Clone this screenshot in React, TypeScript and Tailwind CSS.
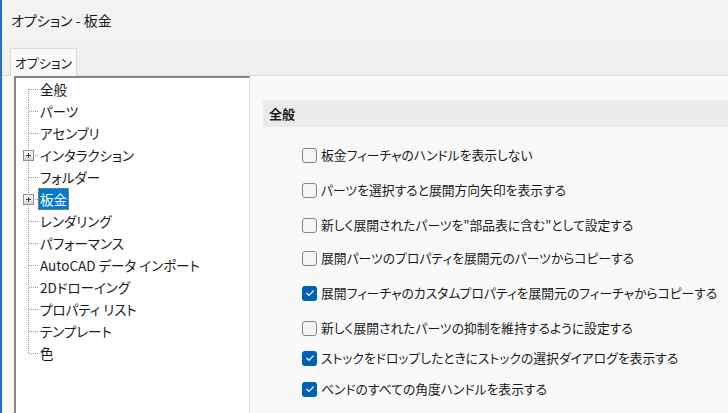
import * as React from "react"

interface TreeItem {
  label: string
  expandable?: boolean
  selected?: boolean
}

interface OptionRow {
  label: string
  checked: boolean
  gap: string
}

const treeItems: TreeItem[] = [
  { label: "全般" },
  { label: "パーツ" },
  { label: "アセンブリ" },
  { label: "インタラクション", expandable: true },
  { label: "フォルダー" },
  { label: "板金", expandable: true, selected: true },
  { label: "レンダリング" },
  { label: "パフォーマンス" },
  { label: "AutoCAD データ インポート" },
  { label: "2Dドローイング" },
  { label: "プロパティ リスト" },
  { label: "テンプレート" },
  { label: "色" },
]

const options: OptionRow[] = [
  { label: "板金フィーチャのハンドルを表示しない", checked: false, gap: "mt-[18px]" },
  { label: "パーツを選択すると展開方向矢印を表示する", checked: false, gap: "mt-[15px]" },
  { label: "新しく展開されたパーツを\"部品表に含む\"として設定する", checked: false, gap: "mt-[15px]" },
  { label: "展開パーツのプロパティを展開元のパーツからコピーする", checked: false, gap: "mt-[13px]" },
  { label: "展開フィーチャのカスタムプロパティを展開元のフィーチャからコピーする", checked: true, gap: "mt-[15px]" },
  { label: "新しく展開されたパーツの抑制を維持するように設定する", checked: false, gap: "mt-[15px]" },
  { label: "ストックをドロップしたときにストックの選択ダイアログを表示する", checked: true, gap: "mt-[10px]" },
  { label: "ベンドのすべての角度ハンドルを表示する", checked: true, gap: "mt-[11px]" },
]

// ツリーの点線と展開ボタン
function TreeLead({ first, last, expandable }: { first: boolean; last: boolean; expandable?: boolean }) {
  const top = first ? 11 : 0
  const bottom = last ? 11 : 22
  return (
    <svg width="22" height="22" viewBox="0 0 22 22" className="shrink-0" shapeRendering="crispEdges">
      <line x1="12.5" y1={top} x2="12.5" y2={bottom} stroke="#9a9a9a" strokeDasharray="1 1" />
      <line x1="13" y1="11.5" x2="22" y2="11.5" stroke="#9a9a9a" strokeDasharray="1 1" />
      {expandable && (
        <g>
          <defs>
            <linearGradient id="pb" x1="0" y1="0" x2="0" y2="1">
              <stop offset="0" stopColor="#ffffff" />
              <stop offset="1" stopColor="#d4d4d4" />
            </linearGradient>
          </defs>
          <rect x="7.5" y="6.5" width="10" height="10" fill="url(#pb)" stroke="#8e8f8f" />
          <line x1="10" y1="11.5" x2="15" y2="11.5" stroke="#1c3b73" />
          <line x1="12.5" y1="9" x2="12.5" y2="14" stroke="#1c3b73" />
        </g>
      )}
    </svg>
  )
}

function CheckBox({ checked }: { checked: boolean }) {
  if (checked) {
    return (
      <span className="w-[15px] h-[15px] rounded-[3px] bg-[#005fb8] flex items-center justify-center shrink-0">
        <svg width="10" height="10" viewBox="0 0 10 10">
          <path d="M1.8 5.2 L4 7.3 L8.3 2.8" fill="none" stroke="#ffffff" strokeWidth="1.2" strokeLinecap="round" strokeLinejoin="round" />
        </svg>
      </span>
    )
  }
  return <span className="w-[15px] h-[15px] rounded-[3px] border border-[#858585] bg-[#f5f5f5] shrink-0" />
}

export default function App() {
  return (
    <div className="w-[728px] h-[413px] overflow-hidden flex flex-col bg-[#f0f0f0] border-l-2 border-[#1f6fd1] text-[#1a1a1a] font-['Noto_Sans_CJK_JP','Noto_Sans',sans-serif] [font-feature-settings:'palt']">
      {/* タイトルバー */}
      <div className="h-[40px] shrink-0 flex items-center pl-[9px] bg-[#f3f3f3] text-[14px]">
        オプション - 板金
      </div>

      {/* タブ */}
      <div className="shrink-0 pt-[8px] pl-[8px] flex">
        <div className="relative z-10 -mb-px h-[28px] w-[67px] bg-[#f9f9f9] border border-b-0 border-[#dcdcdc] flex items-center justify-center text-[13px]">
          オプション
        </div>
      </div>

      {/* タブ内容 */}
      <div className="flex-1 min-h-0 flex bg-[#f9f9f9] border-t border-[#dcdcdc] pl-[12px] pt-[1px]">
        {/* ツリー */}
        <div className="w-[236px] shrink-0 bg-white border-l-2 border-t-2 border-[#858585] border-r border-r-[#e3e3e3] -mt-px text-[13.5px]">
          {treeItems.map((item, i) => (
            <div key={item.label} className="h-[22px] flex items-center">
              <TreeLead first={i === 0} last={i === treeItems.length - 1} expandable={item.expandable} />
              {item.selected ? (
                <span className="h-[22px] px-[2px] flex items-center bg-[#0078d7] text-white outline-1 outline-dotted outline-[#e0901c] -outline-offset-1">
                  {item.label}
                </span>
              ) : (
                <span className="px-[2px] whitespace-nowrap">{item.label}</span>
              )}
            </div>
          ))}
        </div>

        {/* 設定 */}
        <div className="flex-1 min-w-0 pl-[13px] pt-[23px]">
          <div className="h-[27px] bg-[#ebebeb] pl-[6px] flex items-center text-[13px] font-bold">全般</div>
          <div className="pl-[39px] flex flex-col">
            {options.map((opt) => (
              <div key={opt.label} className={`${opt.gap} h-[20px] flex items-center gap-[4px] text-[12.8px] whitespace-nowrap`}>
                <CheckBox checked={opt.checked} />
                <span>{opt.label}</span>
              </div>
            ))}
          </div>
        </div>
      </div>
    </div>
  )
}
